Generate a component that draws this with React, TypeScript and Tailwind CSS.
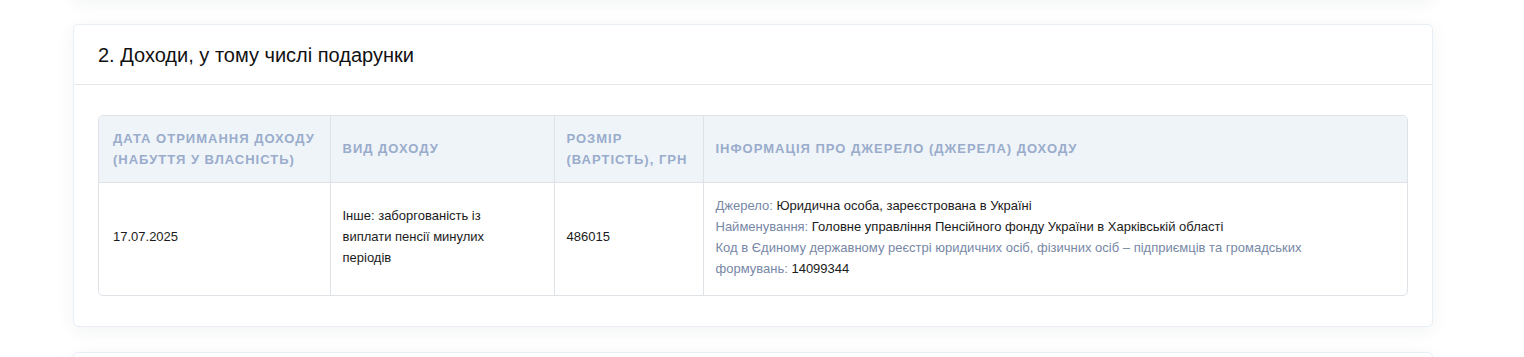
import React from "react";

const font = { fontFamily: '"Liberation Sans", Arial, sans-serif' };

function Card({ className = "", children }: { className?: string; children?: React.ReactNode }) {
  return (
    <div
      className={`w-[1360px] rounded-[5px] border border-[#e9eef5] bg-white shadow-[0_4px_18px_rgba(30,50,80,0.06)] ${className}`}
    >
      {children}
    </div>
  );
}

export default function App() {
  const th = "px-[12px] align-middle text-left text-[13px] font-bold uppercase tracking-[1px] leading-[21px] text-[#9aaccb]";
  const td = "px-[12px] pb-[4px] align-middle text-[13px] leading-[21px] text-[#1b1b1b]";
  const label = "text-[#7787a6]";
  return (
    <div className="min-h-[357px] bg-white overflow-hidden" style={font}>
      <div className="ml-[73px] flex flex-col gap-[25px]">
        <Card className="-mt-[76px] h-[75px]" />
        <Card>
          <div className="h-[60px] flex items-center px-[24px] border-b border-[#e3e7ec]">
            <h2 className="text-[20px] text-[#111] leading-none">2. Доходи, у тому числі подарунки</h2>
          </div>
          <div className="px-[24px] pt-[30px] pb-[30px]">
            <div className="rounded-[5px] border border-[#dfe3e8] overflow-hidden">
              <table className="w-full border-collapse table-fixed">
                <colgroup>
                  <col className="w-[231px]" />
                  <col className="w-[224px]" />
                  <col className="w-[149px]" />
                  <col />
                </colgroup>
                <thead>
                  <tr className="h-[66px] bg-[#eff4f9] border-b border-[#dfe3e8]">
                    <th className={`${th} pl-[14px]`}>Дата отримання доходу (набуття у власність)</th>
                    <th className={`${th} border-l border-[#dfe3e8]`}>Вид доходу</th>
                    <th className={`${th} border-l border-[#dfe3e8]`}>Розмір (вартість), грн</th>
                    <th className={`${th} border-l border-[#dfe3e8]`}>Інформація про джерело (джерела) доходу</th>
                  </tr>
                </thead>
                <tbody>
                  <tr className="h-[113px]">
                    <td className={`${td} pl-[14px]`}>17.07.2025</td>
                    <td className={`${td} border-l border-[#dfe3e8] pr-[40px]`}>
                      Інше: заборгованість із виплати пенсії минулих періодів
                    </td>
                    <td className={`${td} border-l border-[#dfe3e8]`}>486015</td>
                    <td className={`${td} border-l border-[#dfe3e8] pr-[60px]`}>
                      <div>
                        <span className={label}>Джерело:</span> Юридична особа, зареєстрована в Україні
                      </div>
                      <div>
                        <span className={label}>Найменування:</span> Головне управління Пенсійного фонду України в Харківській області
                      </div>
                      <div>
                        <span className={label}>
                          Код в Єдиному державному реєстрі юридичних осіб, фізичних осіб – підприємців та громадських формувань:
                        </span>{" "}
                        14099344
                      </div>
                    </td>
                  </tr>
                </tbody>
              </table>
            </div>
          </div>
        </Card>
        <Card className="h-[60px]" />
      </div>
    </div>
  );
}
